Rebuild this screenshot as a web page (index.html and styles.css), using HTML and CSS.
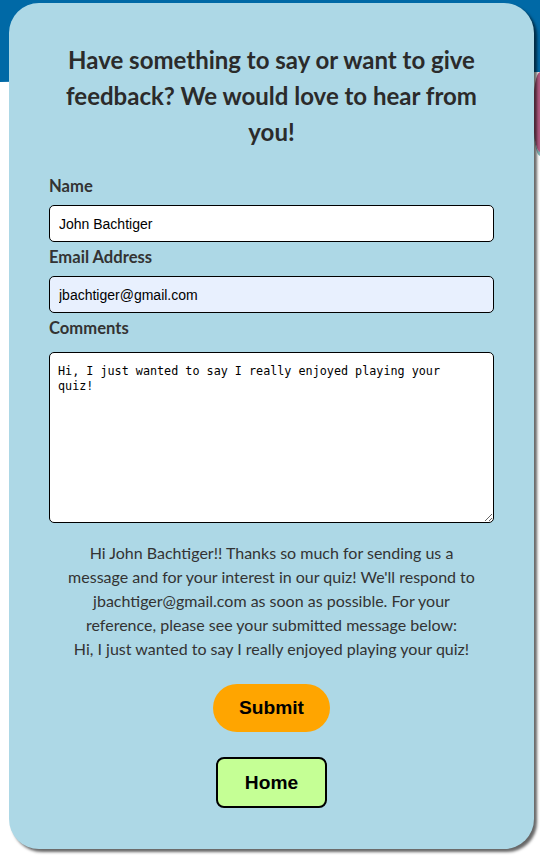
FILE: index.html
```html
<!DOCTYPE html>
<html lang="en">
<head>
<meta charset="utf-8">
<title>Contact</title>
<link rel="stylesheet" href="styles.css">
</head>
<body>
<div class="backdrop" aria-hidden="true">
  <div class="wave"></div>
  <div class="blob"></div>
</div>
<main class="card">
  <h2 class="title">Have something to say or want to give feedback? We would love to hear from you!</h2>
  <form class="form">
    <label class="label" for="name">Name</label>
    <input class="field" id="name" type="text" value="John Bachtiger">
    <label class="label" for="email">Email Address</label>
    <input class="field field-filled" id="email" type="email" value="jbachtiger@gmail.com">
    <label class="label label-comments" for="comments">Comments</label>
    <textarea class="area" id="comments">Hi, I just wanted to say I really enjoyed playing your quiz!</textarea>
  </form>
  <p class="thanks">Hi John Bachtiger!! Thanks so much for sending us a message and for your interest in our quiz! We'll respond to jbachtiger@gmail.com as soon as possible. For your reference, please see your submitted message below:<br>Hi, I just wanted to say I really enjoyed playing your quiz!</p>
  <div class="actions">
    <button class="btn-submit" type="button">Submit</button>
    <button class="btn-home" type="button">Home</button>
  </div>
</main>
</body>
</html>
```
FILE: styles.css
```css
html, body {
  margin: 0;
  padding: 0;
}
body {
  background: #ffffff;
  width: 540px;
  height: 860px;
  overflow: hidden;
  position: relative;
  font-family: "Lato", "Noto Sans", sans-serif;
}
.backdrop {
  position: absolute;
  inset: 0;
  z-index: 0;
  overflow: hidden;
}
.wave {
  position: absolute;
  left: 0;
  top: 0;
  width: 540px;
  height: 84px;
  background: #0069a6;
  clip-path: polygon(0 0, 100% 0, 100% 72px, 0 82px);
}
.blob {
  position: absolute;
  left: 533px;
  top: 72px;
  width: 7px;
  height: 80px;
  border-radius: 100% 0 0 100% / 50% 0 0 50%;
  background: #b25a82;
  box-shadow: 0 4px 0 #7fb3b5;
}
.card {
  position: relative;
  z-index: 1;
  box-sizing: border-box;
  width: 525px;
  height: 846px;
  margin: 3px 0 0 9px;
  padding: 39px 40px 0;
  background: #add8e6;
  border-radius: 30px;
  box-shadow: 3px 3px 3px rgba(0, 0, 0, 0.6);
  display: flex;
  flex-direction: column;
  align-items: stretch;
}
.title {
  margin: 0;
  padding: 0 5px;
  text-align: center;
  font-size: 24px;
  line-height: 36px;
  font-weight: 700;
  color: #2b2b2b;
}
.form {
  display: flex;
  flex-direction: column;
  margin-top: 26px;
}
.label {
  display: block;
  font-size: 16.6px;
  line-height: 20px;
  font-weight: 700;
  color: #333333;
  margin-bottom: 9px;
}
.field + .label {
  margin-top: 5px;
}
.label-comments {
  margin-bottom: 14px;
}
.field {
  box-sizing: border-box;
  width: 445px;
  height: 37px;
  margin: 0;
  padding: 0 9px;
  border: 1px solid #000;
  border-radius: 5px;
  background: #ffffff;
  font-family: "Liberation Sans", Arial, sans-serif;
  font-size: 14px;
  color: #000;
}
.field-filled {
  background: #e8f0fe;
}
.area {
  box-sizing: border-box;
  width: 445px;
  height: 171px;
  margin: 0;
  padding: 11px 24px 8px 8px;
  border: 1px solid #000;
  border-radius: 5px;
  background: #fff;
  font-family: "DejaVu Sans Mono", "Liberation Mono", monospace;
  font-size: 11.75px;
  line-height: 15px;
  color: #000;
  resize: vertical;
}
.thanks {
  margin: 18px 0 0;
  padding: 0 17px;
  text-align: center;
  font-size: 16px;
  line-height: 24px;
  color: #333333;
}
.actions {
  display: flex;
  flex-direction: column;
  align-items: center;
  gap: 25px;
  margin-top: 23px;
}
.btn-submit {
  height: 48px;
  padding: 0 26px;
  border: none;
  border-radius: 24px;
  background: #ffa500;
  font-family: "Liberation Sans", Arial, sans-serif;
  font-weight: 700;
  font-size: 19.2px;
  color: #000;
}
.btn-home {
  height: 51px;
  padding: 0 27px;
  border: 2px solid #000;
  border-radius: 8px;
  background: #c5ff95;
  font-family: "Liberation Sans", Arial, sans-serif;
  font-weight: 700;
  font-size: 19.2px;
  color: #000;
}
```
